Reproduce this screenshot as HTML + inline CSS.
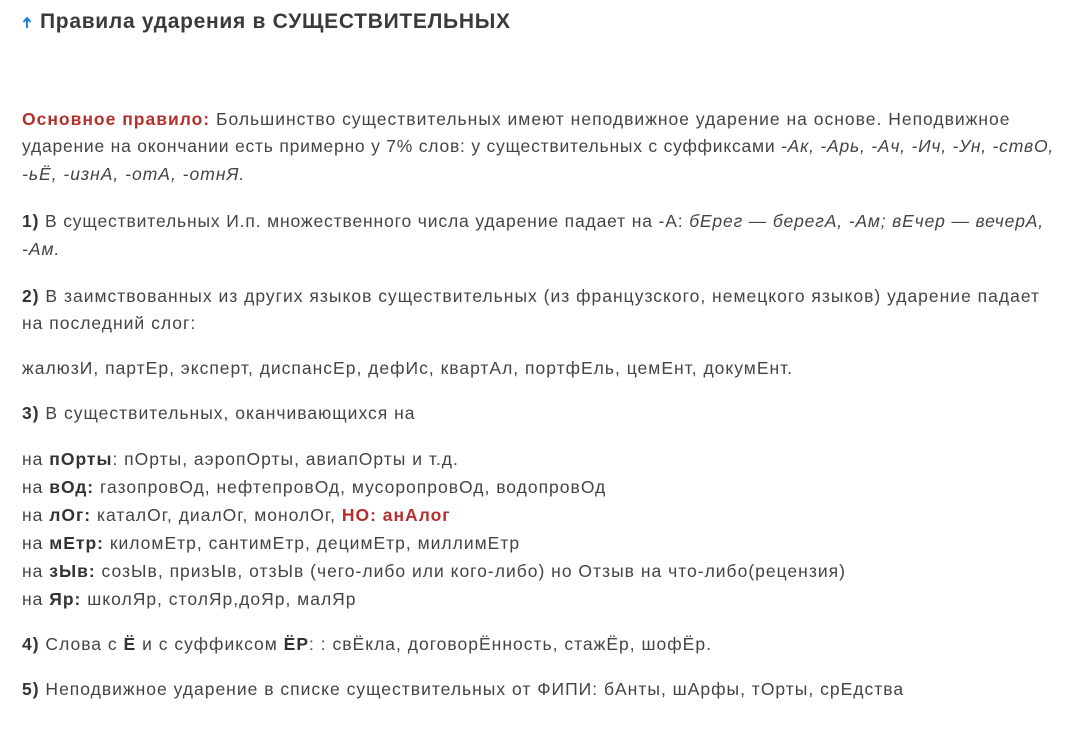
<!DOCTYPE html>
<html><head><meta charset="utf-8"><style>
body{margin:0;background:#fff;width:1068px;height:736px;overflow:hidden;font-family:"Liberation Sans",sans-serif;color:#444;}
.l{position:absolute;left:22px;font-size:17.5px;letter-spacing:1px;white-space:nowrap;line-height:20px;}
.r{color:#b3302c;font-weight:bold}
b{color:#333}
i{font-style:italic}
h1{position:absolute;left:40px;top:10px;margin:0;font-size:21px;font-weight:bold;color:#3a3a3a;letter-spacing:0.7px;line-height:24px}
</style></head><body>
<svg style="position:absolute;left:22px;top:17px" width="10" height="12" viewBox="0 0 10 12"><path d="M5 1 L5 11 M1.5 5 L5 1 L8.5 5" stroke="#1e7fe0" stroke-width="2" fill="none"/></svg>
<h1>Правила ударения в СУЩЕСТВИТЕЛЬНЫХ</h1>
<div class="l" style="top:109px"><span class="r">Основное правило:</span> Большинство существительных имеют неподвижное ударение на основе. Неподвижное</div>
<div class="l" style="top:136px;letter-spacing:0.78px">ударение на окончании есть примерно у 7% слов: у существительных с суффиксами <i>-Ак, -Арь, -Ач, -Ич, -Ун, -ствО,</i></div>
<div class="l" style="top:164px"><i>-ьЁ, -изнА, -отА, -отнЯ.</i></div>
<div class="l" style="top:211px;letter-spacing:0.85px"><b>1)</b> В существительных И.п. множественного числа ударение падает на -А: <i>бЕрег — берегА, -Ам; вЕчер — вечерА,</i></div>
<div class="l" style="top:239px"><i>-Ам.</i></div>
<div class="l" style="top:286px"><b>2)</b> В заимствованных из других языков существительных (из французского, немецкого языков) ударение падает</div>
<div class="l" style="top:313px">на последний слог:</div>
<div class="l" style="top:358px">жалюзИ, партЕр, эксперт, диспансЕр, дефИс, квартАл, портфЕль, цемЕнт, докумЕнт.</div>
<div class="l" style="top:403px"><b>3)</b> В существительных, оканчивающихся на</div>
<div class="l" style="top:449px">на <b>пОрты</b>: пОрты, аэропОрты, авиапОрты и т.д.</div>
<div class="l" style="top:477px">на <b>вОд:</b> газопровОд, нефтепровОд, мусоропровОд, водопровОд</div>
<div class="l" style="top:505px">на <b>лОг:</b> каталОг, диалОг, монолОг, <span class="r">НО: анАлог</span></div>
<div class="l" style="top:533px">на <b>мЕтр:</b> киломЕтр, сантимЕтр, децимЕтр, миллимЕтр</div>
<div class="l" style="top:561px">на <b>зЫв:</b> созЫв, призЫв, отзЫв (чего-либо или кого-либо) но Отзыв на что-либо(рецензия)</div>
<div class="l" style="top:589px">на <b>Яр:</b> школЯр, столЯр,доЯр, малЯр</div>
<div class="l" style="top:634px"><b>4)</b> Слова с <b>Ё</b> и с суффиксом <b>ЁР</b>: : свЁкла, договорЁнность, стажЁр, шофЁр.</div>
<div class="l" style="top:679px"><b>5)</b> Неподвижное ударение в списке существительных от ФИПИ: бАнты, шАрфы, тОрты, срЕдства</div>
</body></html>
